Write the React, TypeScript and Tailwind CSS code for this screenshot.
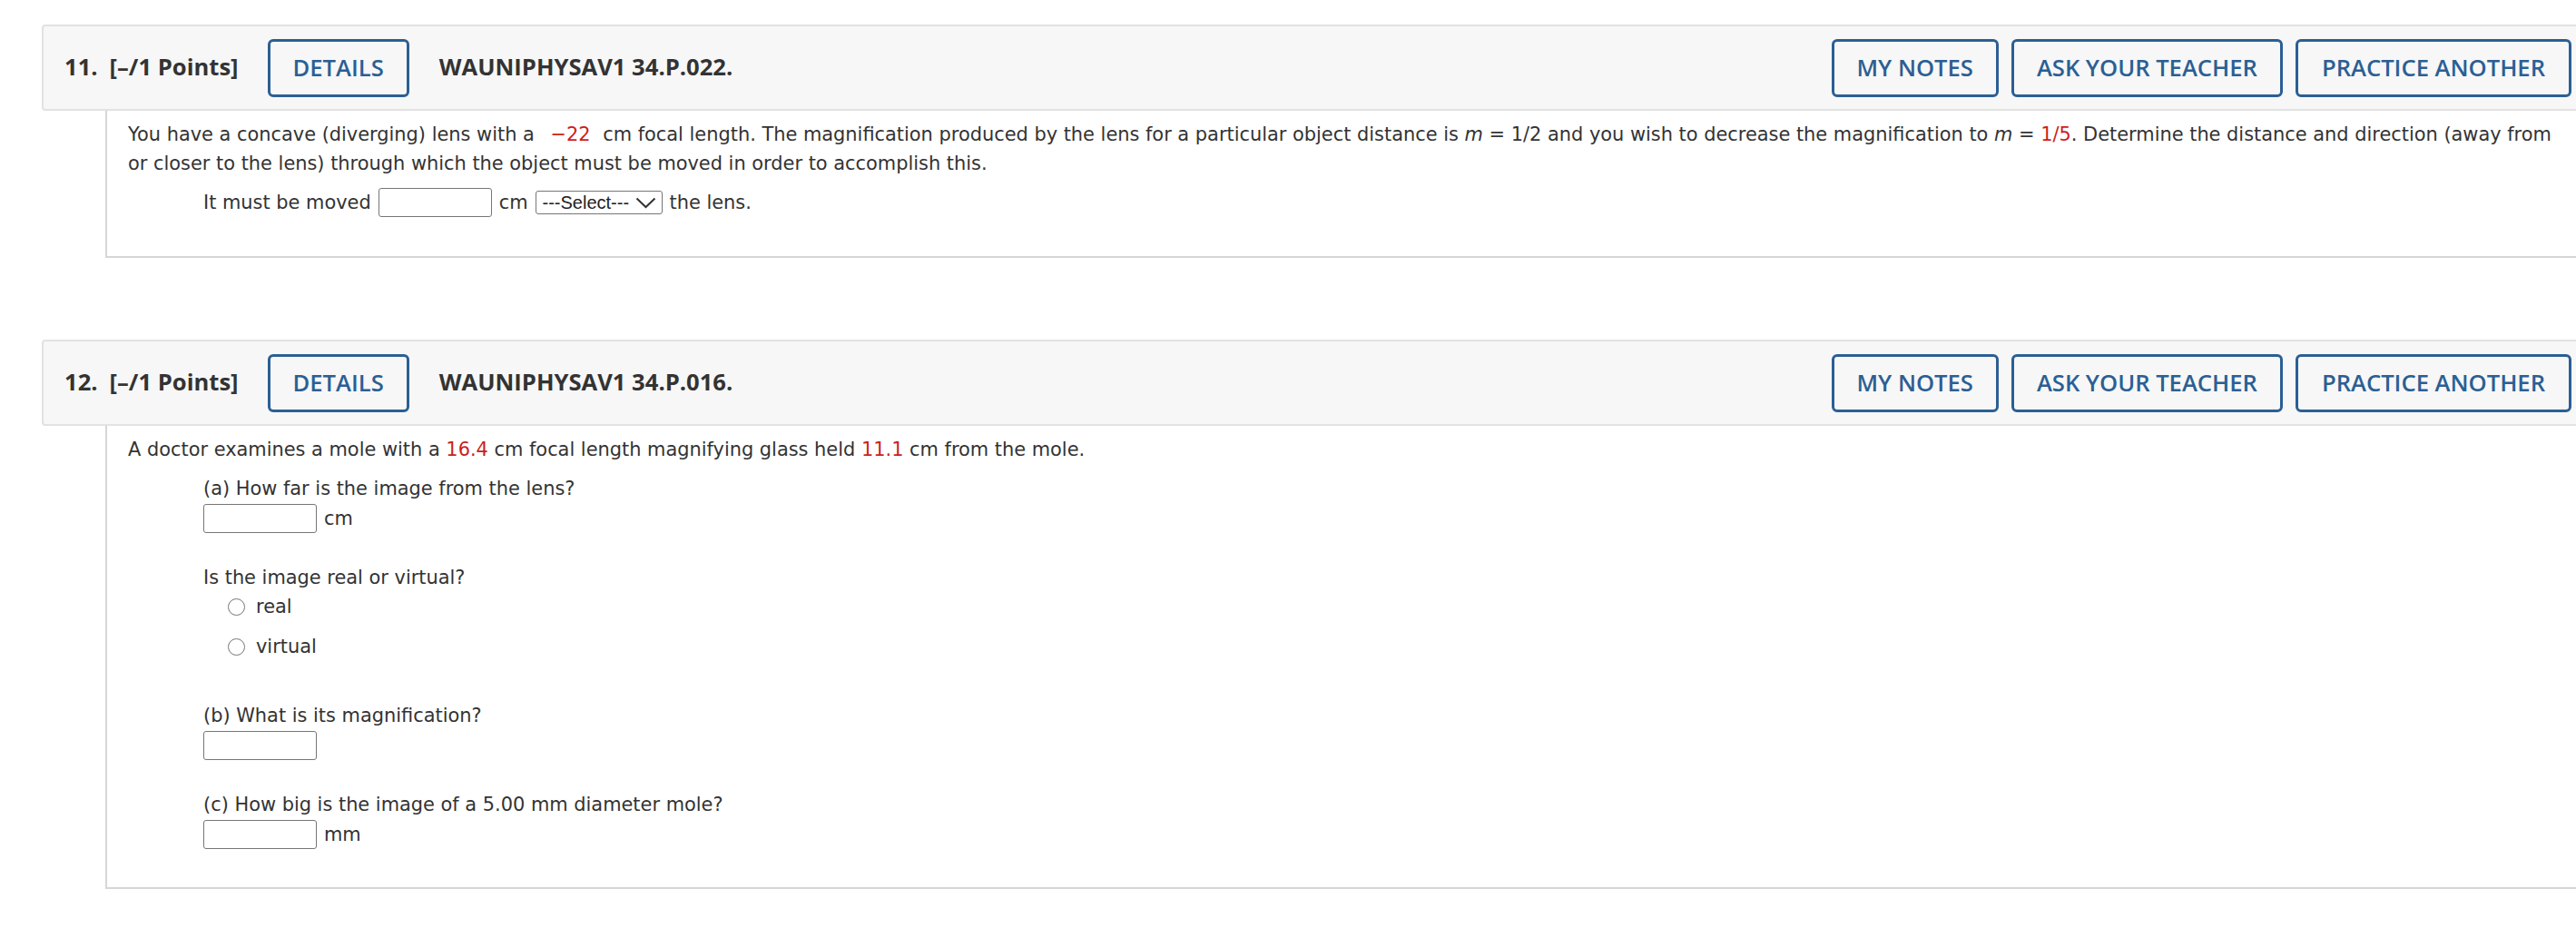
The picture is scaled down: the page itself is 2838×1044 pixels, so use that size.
import React from "react";

const red = "text-[#cc1f1a]";

function HeaderButton({ children, className = "" }: { children: React.ReactNode; className?: string }) {
  return (
    <button
      type="button"
      className={`h-[64px] px-[25px] border-[3px] border-[#2b5f94] rounded-[6px] bg-transparent text-[#2b5f94] font-semibold leading-none ${className}`}
    >
      {children}
    </button>
  );
}

function Header({ num, code }: { num: number; code: string }) {
  return (
    <div className="h-[95px] w-[2800px] flex items-center bg-[#f7f7f7] border-2 border-[#e2e2e2] rounded-l-[4px] pl-[23px] pr-[11px] font-['Open_Sans',sans-serif] text-[25.6px] text-[#333]">
      <span className="font-bold">{num}.</span>
      <span className="font-bold ml-[13px]">[–/1 Points]</span>
      <HeaderButton className="ml-[32px]">DETAILS</HeaderButton>
      <span className="font-bold ml-[33px]">WAUNIPHYSAV1 34.P.{code}.</span>
      <div className="ml-auto flex gap-[14px]">
        <HeaderButton>MY NOTES</HeaderButton>
        <HeaderButton>ASK YOUR TEACHER</HeaderButton>
        <HeaderButton className="px-[26px]">PRACTICE ANOTHER</HeaderButton>
      </div>
    </div>
  );
}

function TextInput() {
  return (
    <input
      type="text"
      aria-label="answer"
      className="w-[125px] h-[32px] border-[1.5px] border-[#767676] rounded-[3px] bg-white outline-none"
    />
  );
}

function Radio({ label }: { label: string }) {
  return (
    <label className="flex items-center h-[32px] ml-[27px] gap-[12px]">
      <span className="w-[19px] h-[19px] rounded-full border-[1.5px] border-[#767676] bg-white inline-block" />
      <span>{label}</span>
    </label>
  );
}

function Q11() {
  return (
    <div>
      <Header num={11} code="022" />
      <div className="ml-[70px] border-l-2 border-b-2 border-[#d6d6d6] pl-[23px] pt-[10px] pb-[43px] font-['DejaVu_Sans',sans-serif] text-[20.9px] leading-[32px] text-[#333]">
        <p>
          <span className="whitespace-nowrap">
            You have a concave (diverging) lens with a{" "}
            <span className={`${red} pl-[11px] pr-[7px]`}>−22</span> cm focal length. The magnification produced by
            the lens for a particular object distance is <i>m</i> = 1/2 and you wish to decrease the magnification to{" "}
            <i>m</i> = <span className={red}>1/5</span>. Determine the distance and direction (away from
          </span>
          <br />
          or closer to the lens) through which the object must be moved in order to accomplish this.
        </p>
        <div className="mt-[11px] ml-[83px] flex items-center gap-[8px] h-[32px]">
          <span>It must be moved</span>
          <TextInput />
          <span>cm</span>
          <div className="h-[26px] w-[140px] border-[1.5px] border-[#767676] rounded-[3px] bg-white flex items-center pl-[7px] pr-[6px] justify-between font-['Liberation_Sans',sans-serif] text-[20px] leading-none text-[#222]">
            <span>---Select---</span>
            <svg width="23" height="13" viewBox="0 0 23 13" fill="none">
              <polyline points="1.5,1.5 11.5,11 21.5,1.5" stroke="#333" strokeWidth="2" />
            </svg>
          </div>
          <span>the lens.</span>
        </div>
      </div>
    </div>
  );
}

function Q12() {
  return (
    <div className="mt-[90px]">
      <Header num={12} code="016" />
      <div className="ml-[70px] border-l-2 border-b-2 border-[#d6d6d6] pl-[23px] pt-[10px] pb-[42px] font-['DejaVu_Sans',sans-serif] text-[20.9px] leading-[32px] text-[#333]">
        <p>
          A doctor examines a mole with a <span className={red}>16.4</span> cm focal length magnifying glass held{" "}
          <span className={red}>11.1</span> cm from the mole.
        </p>
        <div className="ml-[83px]">
          <p className="mt-[11px]">(a) How far is the image from the lens?</p>
          <div className="flex items-center gap-[8px] h-[33px]">
            <TextInput />
            <span>cm</span>
          </div>
          <p className="mt-[33px]">Is the image real or virtual?</p>
          <Radio label="real" />
          <div className="mt-[12px]">
            <Radio label="virtual" />
          </div>
          <p className="mt-[44px]">(b) What is its magnification?</p>
          <div className="flex items-center gap-[8px] h-[33px]">
            <TextInput />
          </div>
          <p className="mt-[33px]">(c) How big is the image of a 5.00 mm diameter mole?</p>
          <div className="flex items-center gap-[8px] h-[33px]">
            <TextInput />
            <span>mm</span>
          </div>
        </div>
      </div>
    </div>
  );
}

export default function App() {
  return (
    <div className="w-[2838px] h-[1044px] overflow-hidden bg-white pt-[27px] pl-[46px]">
      <Q11 />
      <Q12 />
    </div>
  );
}
